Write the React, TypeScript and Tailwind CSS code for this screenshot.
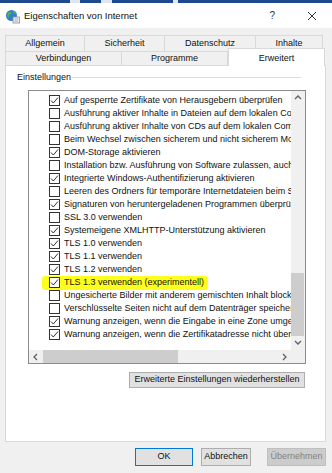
import React from "react";

type Item = { label: string; checked: boolean; marked?: boolean };

const items: Item[] = [
  { label: "Auf gesperrte Zertifikate von Herausgebern überprüfen", checked: true },
  { label: "Ausführung aktiver Inhalte in Dateien auf dem lokalen Computer zulassen", checked: false },
  { label: "Ausführung aktiver Inhalte von CDs auf dem lokalen Computer zulassen", checked: false },
  { label: "Beim Wechsel zwischen sicherem und nicht sicherem Modus warnen", checked: false },
  { label: "DOM-Storage aktivieren", checked: true },
  { label: "Installation bzw. Ausführung von Software zulassen, auch wenn die Signatur ungültig ist", checked: false },
  { label: "Integrierte Windows-Authentifizierung aktivieren", checked: true },
  { label: "Leeren des Ordners für temporäre Internetdateien beim Schließen des Browsers", checked: false },
  { label: "Signaturen von heruntergeladenen Programmen überprüfen", checked: true },
  { label: "SSL 3.0 verwenden", checked: false },
  { label: "Systemeigene XMLHTTP-Unterstützung aktivieren", checked: true },
  { label: "TLS 1.0 verwenden", checked: true },
  { label: "TLS 1.1 verwenden", checked: true },
  { label: "TLS 1.2 verwenden", checked: true },
  { label: "TLS 1.3 verwenden (experimentell)", checked: true, marked: true },
  { label: "Ungesicherte Bilder mit anderem gemischten Inhalt blockieren", checked: false },
  { label: "Verschlüsselte Seiten nicht auf dem Datenträger speichern", checked: false },
  { label: "Warnung anzeigen, wenn die Eingabe in eine Zone umgeleitet wird", checked: true },
  { label: "Warnung anzeigen, wenn die Zertifikatadresse nicht übereinstimmt", checked: true },
];

const Box = ({ checked }: { checked: boolean }) => (
  <span className="w-[11px] h-[11px] shrink-0 border border-[#333] bg-white flex items-center justify-center">
    {checked && (
      <svg width="9" height="9" viewBox="0 0 9 9">
        <polyline points="1,4.5 3.3,7 8,1.5" fill="none" stroke="#333" strokeWidth="1" />
      </svg>
    )}
  </span>
);

const Chevron = ({ dir }: { dir: "up" | "down" | "left" | "right" }) => {
  const pts = {
    up: "1,5 4,2 7,5",
    down: "1,2 4,5 7,2",
    left: "5,1 2,4 5,7",
    right: "2,1 5,4 2,7",
  }[dir];
  return (
    <svg width="8" height="8" viewBox="0 0 8 8">
      <polyline points={pts} fill="none" stroke="#606060" strokeWidth="1.3" />
    </svg>
  );
};

const IeIcon = () => (
  <svg width="15" height="15" viewBox="0 0 15 15">
    <circle cx="6.5" cy="6.5" r="5.5" fill="#2f7fd4" />
    <path d="M3 3.5c1.5-1 3-.5 3.5.8-.6 1.2-2 1-2.5 2.2-.4 1 .4 2-.6 2.6C2.2 8 1.8 5.2 3 3.5z" fill="#57b34a" />
    <path d="M8 2.2c1.6.3 2.8 1.4 3.2 2.6-1 .3-1.6-.5-2.4-.2-.6-.8-1.2-1.4-.8-2.4z" fill="#57b34a" />
    <rect x="8" y="8" width="6.5" height="6" fill="#f4f4f4" stroke="#8a8a8a" strokeWidth="0.8" />
    <line x1="9.3" y1="10" x2="13.2" y2="10" stroke="#9a9a9a" strokeWidth="0.8" />
    <line x1="9.3" y1="12" x2="13.2" y2="12" stroke="#9a9a9a" strokeWidth="0.8" />
  </svg>
);

export default function App() {
  return (
    <div className="w-[332px] h-[473px] bg-[#f0f0f0] flex flex-col overflow-hidden font-['Liberation_Sans',Arial,sans-serif] text-[9px] text-[#111]">
      {/* Edge of the window behind */}
      <div className="h-[3px] bg-[#1d4a8f] flex">
        <div className="ml-[70px] w-[10px] bg-[#dfe6f0]" />
        <div className="ml-[21px] w-[11px] bg-[#dfe6f0]" />
        <div className="ml-[61px] w-[5px] bg-[#dfe6f0]" />
      </div>

      {/* Title bar */}
      <div className="h-[25px] bg-white flex items-center">
        <span className="ml-[5px] mt-[2px]">
          <IeIcon />
        </span>
        <span className="ml-[4px] mt-[1px] text-[9.5px] text-[#111]">Eigenschaften von Internet</span>
        <span className="ml-auto mr-[32px] text-[10px] text-[#333]">?</span>
        <span className="mr-[15px] w-[10px] h-[10px]">
          <svg width="10" height="10" viewBox="0 0 10 10">
            <path d="M1 1l8 8M9 1l-8 8" stroke="#333" strokeWidth="1" />
          </svg>
        </span>
      </div>

      {/* Tabs */}
      <div className="mt-[7px] px-[5px]">
        <div className="flex h-[16px]">
          <div className="w-[80px] border border-b-0 border-[#d9d9d9] flex items-center justify-center">Allgemein</div>
          <div className="w-[80px] border border-b-0 border-l-0 border-[#d9d9d9] flex items-center justify-center">Sicherheit</div>
          <div className="w-[91px] border border-b-0 border-l-0 border-[#d9d9d9] flex items-center justify-center">Datenschutz</div>
          <div className="w-[67px] border border-b-0 border-l-0 border-[#d9d9d9] flex items-center justify-center">Inhalte</div>
        </div>
        <div className="flex h-[14px] items-end">
          <div className="w-[117px] h-[14px] border border-b-0 border-[#d9d9d9] flex items-center justify-center">Verbindungen</div>
          <div className="w-[106px] h-[14px] border border-b-0 border-l-0 border-[#d9d9d9] flex items-center justify-center">Programme</div>
          <div className="relative z-10 w-[97px] h-[18px] mb-[-1px] bg-white border border-b-0 border-[#d9d9d9] flex items-start justify-center pt-[3px]">
            Erweitert
          </div>
        </div>
      </div>

      {/* Panel */}
      <div className="mx-[5px] w-[321px] h-[377px] bg-white border border-[#d9d9d9] flex flex-col">
        <div className="mt-[6px] ml-[11px] mr-[24px] flex items-center h-[11px]">
          <span>Einstellungen</span>
          <span className="flex-1 h-px bg-[#dcdcdc] ml-[1px]" />
        </div>

        <div className="ml-[22px] mt-[7px] w-[278px] flex flex-col items-end">
          {/* List box */}
          <div className="w-[278px] h-[274px] border border-[#8c8c8c] flex flex-col">
            <div className="flex flex-1 min-h-0">
              <div className="flex-1 min-w-0 overflow-hidden pt-[3px]">
                {items.map((it) => (
                  <div key={it.label} className={`h-[13px] flex items-center whitespace-nowrap ${it.marked ? "pl-[13px]" : "pl-[20px]"}`}>
                    {it.marked ? (
                      <div className="flex items-center h-[14px] w-[166px] pl-[7px] bg-[#ffff1e] rounded-[3px]">
                        <Box checked={it.checked} />
                        <span className="ml-[4px]">{it.label}</span>
                      </div>
                    ) : (
                      <>
                        <Box checked={it.checked} />
                        <span className="ml-[4px]">{it.label}</span>
                      </>
                    )}
                  </div>
                ))}
              </div>
              {/* Vertical scrollbar */}
              <div className="w-[14px] bg-[#f0f0f0] flex flex-col">
                <div className="h-[14px] flex items-center justify-center">
                  <Chevron dir="up" />
                </div>
                <div className="flex-1 flex flex-col justify-end pr-[1px]">
                  <div className="h-[63px] bg-[#cdcdcd]" />
                </div>
                <div className="h-[14px] flex items-center justify-center">
                  <Chevron dir="down" />
                </div>
              </div>
            </div>
            {/* Horizontal scrollbar */}
            <div className="h-[13px] flex bg-[#f0f0f0]">
              <div className="w-[14px] flex items-center justify-center">
                <Chevron dir="left" />
              </div>
              <div className="flex-1 flex items-stretch">
                <div className="w-[135px] bg-[#cdcdcd]" />
              </div>
              <div className="w-[13px] flex items-center justify-center">
                <Chevron dir="right" />
              </div>
              <div className="w-[14px] bg-[#f0f0f0]" />
            </div>
          </div>

          <button className="mt-[8px] mr-[1px] w-[176px] h-[16px] bg-[#e1e1e1] border border-[#adadad] flex items-center justify-center text-[9px] text-[#111]">
            Erweiterte Einstellungen wiederherstellen
          </button>
        </div>
      </div>

      {/* Dialog buttons */}
      <div className="mt-[6px] flex h-[18px]">
        <button className="ml-[135px] w-[58px] h-[18px] bg-[#e1e1e1] border border-[#0078d7] text-[9px] text-[#111]">OK</button>
        <button className="ml-[8px] w-[50px] h-[18px] bg-[#e1e1e1] border border-[#adadad] text-[9px] text-[#111]">Abbrechen</button>
        <button className="ml-[16px] w-[59px] h-[18px] bg-[#cccccc] border border-[#bfbfbf] text-[9px] text-[#838383]">Übernehmen</button>
      </div>
    </div>
  );
}
